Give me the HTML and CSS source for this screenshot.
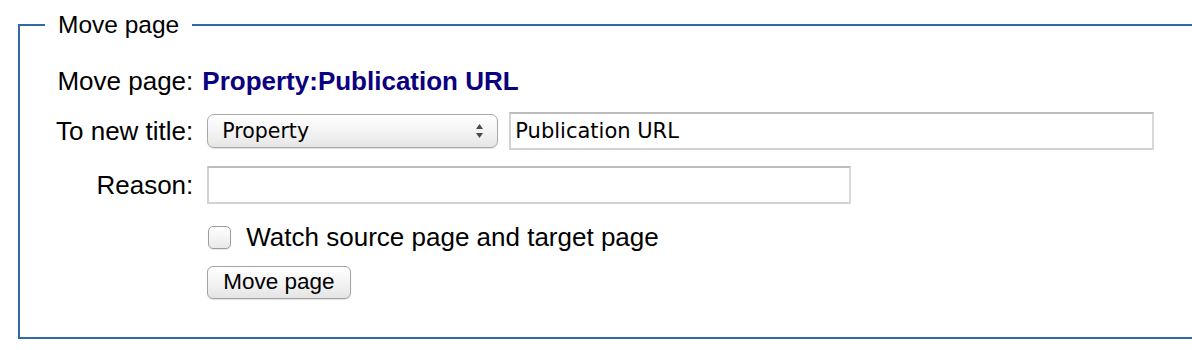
FILE: index.html
```html
<!DOCTYPE html>
<html lang="en">
<head>
    <meta charset="UTF-8">
    <meta name="viewport" content="width=device-width, initial-scale=1.0">
    <title>Move page</title>
    <link rel="stylesheet" href="styles.css">
</head>

<body>
    <form class="movepage">
        <fieldset class="box">
            <legend>Move page</legend>

            <div class="rows">
                <div class="label">Move page:</div>
                <div class="field"><a href="#" class="title">Property:Publication URL</a></div>

                <label class="label" for="ns">To new title:</label>
                <div class="field newtitle">
                    <span class="select-wrap">
                        <select id="ns" name="ns">
                            <option>Property</option>
                            <option>(Main)</option>
                            <option>Talk</option>
                        </select>
                        <svg class="arrows" width="9" height="16" viewBox="0 0 9 16">
                            <path d="M4.5 1 L8 6 L1 6 Z" fill="#4a4a4a"/>
                            <path d="M1 10 L8 10 L4.5 15 Z" fill="#4a4a4a"/>
                        </svg>
                    </span>
                    <input type="text" class="text wide" name="title" value="Publication URL">
                </div>

                <label class="label" for="reason">Reason:</label>
                <div class="field">
                    <input type="text" class="text" id="reason" name="reason">
                </div>

                <div class="label"></div>
                <div class="field check">
                    <input type="checkbox" id="watch" name="watch">
                    <label for="watch">Watch source page and target page</label>
                </div>

                <div class="label"></div>
                <div class="field submit">
                    <button type="button" class="btn">Move page</button>
                </div>
            </div>
        </fieldset>
    </form>
</body>
</html>
```

FILE: styles.css
```css
* {
    box-sizing: border-box;
}
html, body {
    overflow: hidden;
}
body {
    margin: 0;
    background: #fff;
    color: #000;
    font-family: "Liberation Sans", Arial, sans-serif;
    font-size: 26px;
}
.box {
    margin: 10px -40px 0 18px;
    padding: 26px 0 38px 25px;
    border: 2px solid #2f6aa9;
    border-right: none;
    min-width: 0;
}
.box legend {
    padding: 0 13px;
    font-size: 24.5px;
    line-height: 30px;
}
.rows {
    display: grid;
    grid-template-columns: auto 1fr;
    column-gap: 9px;
    row-gap: 16px;
    align-items: center;
    margin-left: 11px;
}
.label {
    text-align: right;
    line-height: 30px;
}
.field {
    line-height: 30px;
}
.title {
    color: #0b0080;
    font-weight: bold;
    text-decoration: none;
}
.newtitle {
    display: flex;
    align-items: center;
    gap: 11px;
}
.select-wrap {
    position: relative;
    display: inline-block;
    margin-left: 5px;
}
select {
    appearance: none;
    -webkit-appearance: none;
    width: 291px;
    height: 34px;
    padding: 0 30px 0 14px;
    border: 1px solid #a9a9a9;
    border-radius: 7px;
    background: linear-gradient(to bottom, #ffffff, #f1f1f1 60%, #e6e6e6);
    box-shadow: 0 1px 1px rgba(0, 0, 0, 0.12);
    font-family: "DejaVu Sans", sans-serif;
    font-size: 20.5px;
    color: #000;
}
.arrows {
    position: absolute;
    right: 14px;
    top: 9px;
}
.text {
    height: 38px;
    margin-left: 5px;
    padding: 0 4px;
    border: 2px solid #d2d2d2;
    border-top-color: #bcbcbc;
    border-right-color: #d8d8d8;
    background: #fff;
    font-family: "DejaVu Sans", sans-serif;
    font-size: 21px;
    color: #000;
}
#reason {
    width: 644px;
}
.wide {
    width: 645px;
    margin-left: 0;
}
.check {
    display: flex;
    align-items: center;
    gap: 15px;
    margin-top: 2px;
}
.check input {
    appearance: none;
    -webkit-appearance: none;
    width: 23px;
    height: 23px;
    margin: 0 0 0 6px;
    border: 1px solid #9d9d9d;
    border-radius: 5px;
    background: linear-gradient(to bottom, #ffffff, #e9e9e9);
    box-shadow: 0 1px 1px rgba(0, 0, 0, 0.1);
}
.submit {
    margin-top: -3px;
}
.btn {
    height: 33px;
    margin-left: 5px;
    padding: 0 15px;
    border: 1px solid #a3a3a3;
    border-radius: 6px;
    background: linear-gradient(to bottom, #ffffff, #f2f2f2 55%, #e4e4e4);
    box-shadow: 0 1px 1px rgba(0, 0, 0, 0.12);
    font-family: "Liberation Sans", Arial, sans-serif;
    font-size: 22.5px;
    color: #000;
}
```
